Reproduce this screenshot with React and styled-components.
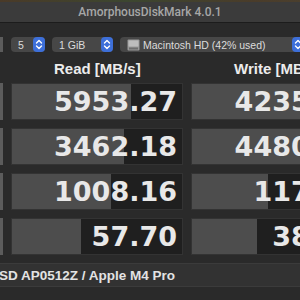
import styled, { createGlobalStyle } from "styled-components";

const Global = createGlobalStyle`
	html, body {
		margin: 0;
		padding: 0;
		background: #262626;
		overflow: hidden;
	}
	body {
		font-family: "Liberation Sans", Arial, sans-serif;
	}
`;

const rows = [
	{ read: "5953.27", readBar: 119, write: "4235.", writeBar: 172 },
	{ read: "3462.18", readBar: 112, write: "4480.", writeBar: 172 },
	{ read: "1008.16", readBar: 99, write: "117.", writeBar: 76 },
	{ read: "57.70", readBar: 69, write: "38.", writeBar: 65 },
];

export default function App() {
	return (
		<Window>
			<Global />
			<Wallpaper />
			<TitleBar>AmorphousDiskMark 4.0.1</TitleBar>
			<Body>
				<Toolbar>
					<EdgeButton />
					<Select width={34}>
						<span>5</span>
						<Stepper />
					</Select>
					<Select width={61}>
						<span>1 GiB</span>
						<Stepper />
					</Select>
					<Select width={184}>
						<DiskIcon />
						<span>Macintosh HD (42% used)</span>
						<Stepper />
					</Select>
				</Toolbar>
				<Grid>
					<span />
					<Header>Read [MB/s]</Header>
					<Header>Write [MB/s]</Header>
					{rows.map((r, i) => (
						<Row key={i}>
							<EdgeButton />
							<Cell>
								<Bar style={{ width: r.readBar }} />
								<Value>{r.read}</Value>
							</Cell>
							<Cell>
								<Bar style={{ width: r.writeBar }} />
								<Value cut>{r.write}</Value>
							</Cell>
						</Row>
					))}
				</Grid>
				<Footer>
					<FooterText>SSD AP0512Z / Apple M4 Pro</FooterText>
				</Footer>
			</Body>
		</Window>
	);
}

function Stepper() {
	return (
		<StepperBox>
			<svg width="8" height="11" viewBox="0 0 8 11" fill="none" stroke="#fff" strokeWidth="1.4" strokeLinecap="round" strokeLinejoin="round">
				<path d="M1.5 4 L4 1.5 L6.5 4" />
				<path d="M1.5 7 L4 9.5 L6.5 7" />
			</svg>
		</StepperBox>
	);
}

function DiskIcon() {
	return (
		<svg width="13" height="12" viewBox="0 0 13 12" style={{ marginRight: 3, flexShrink: 0 }}>
			<rect x="0.5" y="0.5" width="12" height="11" rx="1" fill="#9a9a9a" />
			<rect x="1.5" y="1.5" width="10" height="6" fill="#bdbdbd" />
			<rect x="2" y="8.5" width="9" height="2" fill="#6e6e6e" />
		</svg>
	);
}

const Window = styled.div`
	width: 380px;
	height: 300px;
	background: #262626;
	display: flex;
	flex-direction: column;
`;

const Wallpaper = styled.div`
	height: 2px;
	background: linear-gradient(90deg, #4a3a28, #3c4630, #4a3c2a, #4c4434);
`;

const TitleBar = styled.div`
	width: 300px;
	height: 20px;
	background: #3b3b3b;
	border-bottom: 1px solid #1c1c1c;
	color: #a7a7a7;
	font-family: Roboto, "Liberation Sans", sans-serif;
	font-weight: 500;
	font-size: 12px;
	line-height: 20px;
	text-align: center;
`;

const Body = styled.div`
	background: #2a2a2a;
	flex: 1;
	display: flex;
	flex-direction: column;
`;

const Toolbar = styled.div`
	display: flex;
	align-items: center;
	gap: 7px;
	margin-top: 14px;
	height: 15px;
`;

const EdgeButton = styled.div`
	width: 3px;
	align-self: stretch;
	background: #5c5c5c;
	margin-right: 1px;
`;

const Select = styled.div`
	width: ${(p) => p.width}px;
	height: 15px;
	flex-shrink: 0;
	background: #474747;
	border-radius: 4px;
	display: flex;
	align-items: center;
	padding-left: 7px;
	box-sizing: border-box;
	color: #dcdcdc;
	font-size: 10.5px;

	span {
		flex: 1;
		white-space: nowrap;
	}
`;

const StepperBox = styled.div`
	width: 12px;
	height: 15px;
	background: #3d6fd9;
	border-radius: 4px;
	display: flex;
	align-items: center;
	justify-content: center;
	flex-shrink: 0;
`;

const Grid = styled.div`
	display: grid;
	grid-template-columns: 3px 172px 172px;
	column-gap: 8px;
	margin-top: 8px;
`;

const Header = styled.div`
	color: #ececec;
	font-weight: 700;
	font-size: 15px;
	height: 23px;
	line-height: 18px;
	padding-left: 43px;
	white-space: nowrap;
`;

const Row = styled.div`
	display: contents;

	& > * {
		margin-bottom: 8px;
	}
`;

const Cell = styled.div`
	height: 37px;
	background: #1f1f1f;
	border: 1px solid #333;
	box-sizing: border-box;
	display: flex;
	align-items: center;
	justify-content: flex-end;
	overflow: hidden;
	position: relative;
`;

const Bar = styled.div`
	position: absolute;
	left: 0;
	top: 0;
	bottom: 0;
	background: #4d4d4d;
`;

const Value = styled.div`
	position: relative;
	color: #e8e8e8;
	font-family: "DejaVu Sans", Verdana, sans-serif;
	font-weight: 700;
	font-size: 27px;
	padding-right: ${(p) => (p.cut ? 42 : 5)}px;
	white-space: nowrap;
`;

const Footer = styled.div`
	height: 22px;
	background: #323232;
	border-top: 1px solid #3b3b3b;
	border-bottom: 1px solid #3b3b3b;
	display: flex;
	align-items: center;
	overflow: hidden;
`;

const FooterText = styled.div`
	color: #e3e3e3;
	font-weight: 700;
	font-size: 13.5px;
	margin-left: -10px;
	white-space: nowrap;
`;
